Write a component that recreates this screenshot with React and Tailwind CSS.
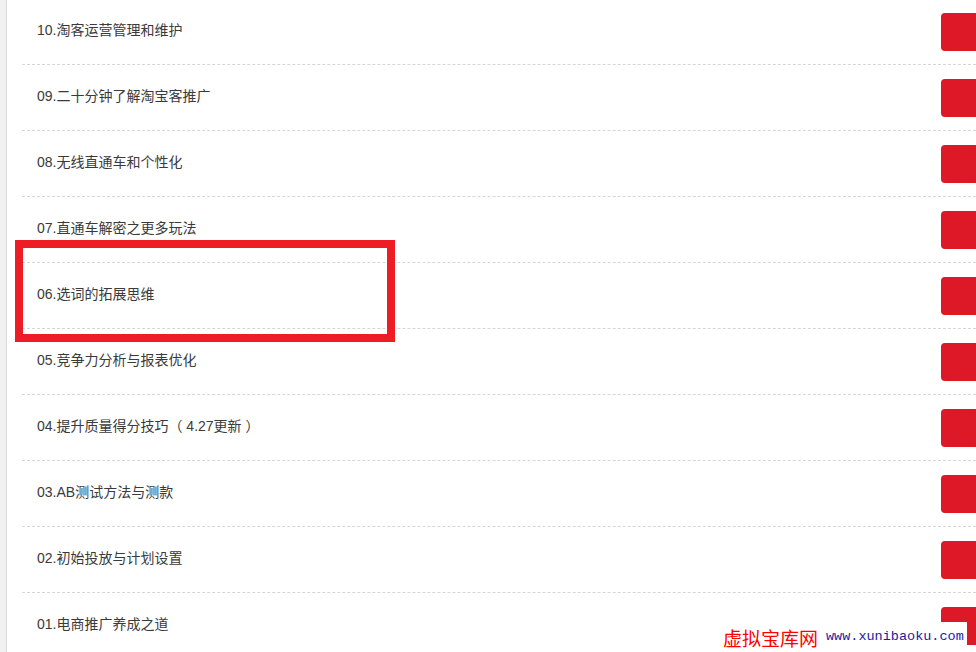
import React from "react";

const items = [
  "10.淘客运营管理和维护",
  "09.二十分钟了解淘宝客推广",
  "08.无线直通车和个性化",
  "07.直通车解密之更多玩法",
  "06.选词的拓展思维",
  "05.竞争力分析与报表优化",
  "04.提升质量得分技巧（ 4.27更新 ）",
  "03.AB测试方法与测款",
  "02.初始投放与计划设置",
  "01.电商推广养成之道",
];

export default function App() {
  return (
    <div
      className="relative w-[976px] h-[652px] overflow-hidden bg-white flex"
      style={{ fontFamily: '"Liberation Sans", "Noto Sans CJK SC", sans-serif' }}
    >
      <div className="w-[7px] shrink-0 bg-[#f1f1f1] border-r border-[#dcdcdc]" />
      <div className="flex-1 pl-[15px] -mt-[1px]">
        {items.map((t) => (
          <div
            key={t}
            className="h-[66px] flex items-center justify-between border-b border-dashed border-[#d6d6d6] pl-[15px]"
          >
            <span className="text-[14px] text-[#3a3a3a] leading-none mb-[4px]">{t}</span>
            <div className="w-[50px] h-[38px] -mr-[15px] rounded-[4px] bg-[#dd1827] shrink-0" />
          </div>
        ))}
      </div>
      <div className="absolute left-[15px] top-[240px] w-[380px] h-[102px] border-[8px] border-[#ee1c25]" />
      <div className="absolute left-[718px] top-[622px] w-[249px] h-[30px] bg-white flex items-center pl-[5px] gap-[8px]">
        <span
          className="text-[#ff0000] text-[19px] leading-none"
          style={{ fontFamily: '"Noto Sans CJK SC", sans-serif' }}
        >
          虚拟宝库网
        </span>
        <span
          className="text-[#1a1aa6] text-[13.5px] leading-none"
          style={{ fontFamily: '"Liberation Mono", monospace' }}
        >
          www.xunibaoku.com
        </span>
      </div>
    </div>
  );
}
